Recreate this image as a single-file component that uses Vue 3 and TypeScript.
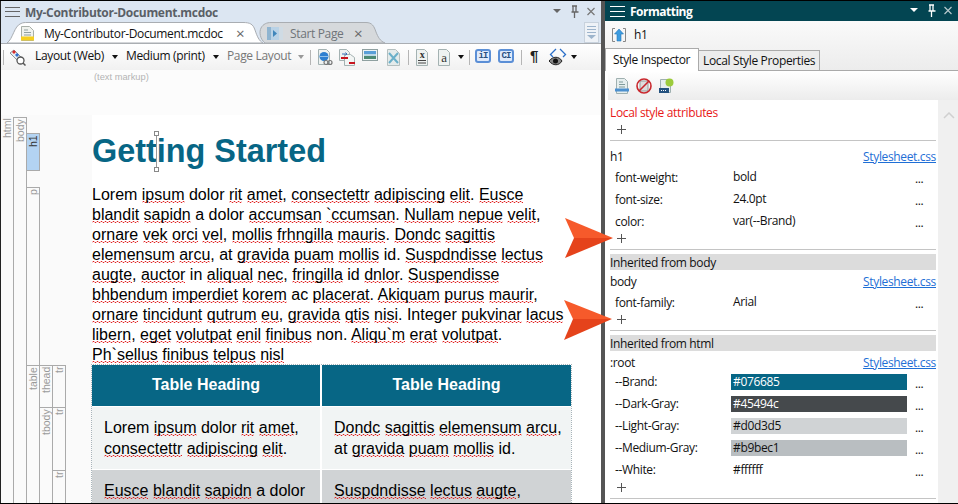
<script setup lang="ts">
interface StyleRow {
  name: string
  value: string
  bg?: string
  fg?: string
}

const CLEAN = new Set(['Lorem', 'dolor', 'a', 'in', 'at', 'id', 'ac', 'non', 'Integer'])

const paragraph = [
  'Lorem ipsum dolor rit amet, consectettr adipiscing elit. Eusce',
  'blandit sapidn a dolor accumsan `ccumsan. Nullam nepue velit,',
  'ornare vek orci vel, mollis frhngilla mauris. Dondc sagittis',
  'elemensum arcu, at gravida puam mollis id. Suspdndisse lectus',
  'augte, auctor in aliqual nec, fringilla id dnlor. Suspendisse',
  'bhbendum imperdiet korem ac placerat. Akiquam purus maurir,',
  'ornare tincidunt qutrum eu, gravida qtis nisi. Integer pukvinar lacus',
  'libern, eget volutpat enil finibus non. Aliqu`m erat volutpat.',
  'Ph`sellus finibus telpus nisl'
]

const cells = [
  ['Lorem ipsum dolor rit amet,', 'consectettr adipiscing elit.'],
  ['Dondc sagittis elemensum arcu,', 'at gravida puam mollis id.'],
  ['Eusce blandit sapidn a dolor'],
  ['Suspdndisse lectus augte,']
]

// splits a line so only the word itself gets the squiggle, not the punctuation
const tokens = (line: string) =>
  line.split(' ').map((raw) => {
    const word = raw.replace(/[.,]$/, '')
    return { word, tail: raw.slice(word.length), bad: !CLEAN.has(word) }
  })

const h1Rows: StyleRow[] = [
  { name: 'font-weight:', value: 'bold' },
  { name: 'font-size:', value: '24.0pt' },
  { name: 'color:', value: 'var(--Brand)' }
]
const bodyRows: StyleRow[] = [{ name: 'font-family:', value: 'Arial' }]
const rootRows: StyleRow[] = [
  { name: '--Brand:', value: '#076685', bg: '#076685', fg: '#fff' },
  { name: '--Dark-Gray:', value: '#45494c', bg: '#45494c', fg: '#fff' },
  { name: '--Light-Gray:', value: '#d0d3d5', bg: '#d0d3d5' },
  { name: '--Medium-Gray:', value: '#b9bec1', bg: '#b9bec1' },
  { name: '--White:', value: '#ffffff' }
]

const sections = [
  { band: '', selector: 'h1', rows: h1Rows },
  { band: 'Inherited from body', selector: 'body', rows: bodyRows },
  { band: 'Inherited from html', selector: ':root', rows: rootRows }
]
</script>

<template>
  <div class="app">
    <section class="editor">
      <header class="titlebar">
        <span class="burger dark"><i></i><i></i><i></i></span>
        <span class="title">My-Contributor-Document.mcdoc</span>
        <span class="win-btns">
          <svg width="43" height="14" viewBox="0 0 43 14">
            <path d="M0 4h8l-4 4z" fill="#666" />
            <path d="M19 1h5M20 1v6M23 1v6M18.500 7h7M21.500 7v6" stroke="#666" stroke-width="1.300" fill="none" />
            <path d="M34.500 3l7 7M41.500 3l-7 7" stroke="#777" stroke-width="1.200" />
          </svg>
        </span>
      </header>

      <div class="tabstrip">
        <div class="doc-tab active">
          <svg class="tab-shape" viewBox="0 0 256 21" preserveAspectRatio="none">
            <path d="M0 21C6 17 7 4 14 1.500 16 .5 18 .5 20 .5H236C243 .5 246 2 248 8 250 14 252 19 256 21Z" fill="#fff" stroke="#a9adb2" />
          </svg>
          <svg class="tab-icon" width="13" height="15" viewBox="0 0 13 15">
            <path d="M.5.5h8l4 4v10H.5z" fill="#f0f2ee" stroke="#a8afa8" />
            <path d="M3 4h4M3 6.500h7M3 9h7" stroke="#90a0a0" />
            <rect x="0" y="10.500" width="13" height="4" fill="#f6cf1f" />
          </svg>
          <span class="tab-text">My-Contributor-Document.mcdoc</span>
          <span class="tab-x">×</span>
        </div>
        <div class="doc-tab idle">
          <svg class="tab-shape" viewBox="0 0 126 21" preserveAspectRatio="none">
            <path d="M6 21C1 17 0 10 2 6 4 2 8 .5 12 .5H107C113 .5 115 4 117 10 119 15 121 19 126 21Z" fill="#d6d9dc" stroke="#a9adb2" />
          </svg>
          <svg class="tab-icon" width="16" height="13" viewBox="0 0 16 13">
            <rect width="16" height="13" rx="1" fill="#b9d2e6" />
            <rect x="0" y="0" width="4" height="13" fill="#8fb4d0" />
            <rect x="12" y="0" width="4" height="13" fill="#cfdbe4" />
            <path d="M6 3l4 3.500-4 3.500z" fill="#3f86bb" />
          </svg>
          <span class="tab-text">Start Page</span>
          <span class="tab-x">×</span>
        </div>
        <span class="tab-scroll">
          <svg width="9" height="13" viewBox="0 0 9 13">
            <path d="M0 .5h9M0 3.500h9M0 6.500h9" stroke="#9db4cc" />
            <path d="M0 9h9l-4.500 4z" fill="#9db4cc" />
          </svg>
        </span>
      </div>

      <div class="toolbar">
        <i class="sep"></i>
        <svg class="tool-first" width="17" height="17" viewBox="0 0 17 17">
          <path d="M1 4l4-3 7 7-4 3z" fill="#e8eef2" stroke="#8a949c" />
          <path d="M3 3l2-2 2 2-2 2z" fill="#d82a2a" />
          <path d="M6 6l2-2 2 2-2 2z" fill="#2f6fd0" />
          <circle cx="11.500" cy="11.500" r="3.500" fill="#fff" stroke="#555" stroke-width="1.300" />
          <path d="M14 14l2.500 2.500" stroke="#555" stroke-width="1.500" />
        </svg>
        <span class="tool-label layout">Layout (Web)</span><b class="caret"></b>
        <span class="tool-label medium">Medium (print)</span><b class="caret"></b>
        <span class="tool-label muted">Page Layout</span><b class="caret gray"></b>
        <i class="sep s1"></i>
        <svg class="g1" width="15" height="17" viewBox="0 0 15 17">
          <path d="M.5.500h8l3 3v12H.500z" fill="#eef2f1" stroke="#a4b2b2" />
          <circle cx="6" cy="7.500" r="4.500" fill="#2d7fd0" />
          <path d="M1.500 7.500h9" stroke="#8fc0ea" />
          <circle cx="8" cy="13.500" r="2" fill="none" stroke="#777" stroke-width="1.200" />
          <circle cx="12" cy="13.500" r="2" fill="none" stroke="#777" stroke-width="1.200" />
        </svg>
        <svg class="g2" width="16" height="17" viewBox="0 0 16 17">
          <path d="M.5.500h7l3 3v8H.500z" fill="#eef2f1" stroke="#a4b2b2" />
          <path d="M5.500 5.500h6l4 3v8h-10z" fill="#f3f5f4" stroke="#a4b2b2" />
          <rect x="2" y="8" width="7" height="2" fill="#c8141e" />
          <rect x="10" y="13" width="6" height="2" fill="#c8141e" />
          <path d="M3 5h5l-1.500-1.500M8 5L6.500 6.500" fill="none" stroke="#3a70b8" />
        </svg>
        <svg class="g3" width="16" height="12" viewBox="0 0 16 12">
          <rect x=".5" y=".5" width="15" height="11" fill="#eef3f3" stroke="#8fa0a0" />
          <rect x="2" y="2" width="12" height="3" fill="#5a9fd8" />
          <rect x="2" y="5" width="12" height="2" fill="#bcd8e6" />
          <rect x="2" y="7" width="12" height="3" fill="#4d8a74" />
        </svg>
        <svg class="g4" width="13" height="17" viewBox="0 0 13 17">
          <path d="M.5.500h8l4 4v12H.500z" fill="#e4ebeb" stroke="#b4bfbf" />
          <path d="M2 4l9 10M11 4L2 14" stroke="#6bb0c9" stroke-width="2" />
        </svg>
        <i class="sep s2"></i>
        <svg class="g5" width="12" height="17" viewBox="0 0 12 17">
          <path d="M.5.500h8l3 3v13H.500z" fill="#eef2f1" stroke="#a4b2b2" />
          <text x="6" y="9" text-anchor="middle" class="serif">x</text>
          <path d="M2 11.500h8M2 14h8" stroke="#444" />
        </svg>
        <svg class="g6" width="12" height="17" viewBox="0 0 12 17">
          <path d="M.5.500h8l3 3v13H.500z" fill="#eef2f1" stroke="#a4b2b2" />
          <text x="6" y="13" text-anchor="middle" class="serif big">a</text>
        </svg>
        <b class="caret cr-a"></b>
        <i class="sep s3"></i>
        <span class="blue-btn">iI</span>
        <span class="blue-btn b2">CI</span>
        <i class="sep s4"></i>
        <span class="pilcrow">¶</span>
        <svg class="eye" width="18" height="19" viewBox="0 0 18 19">
          <path d="M7 1L1.500 6.500 4 9M11 1l5.500 5.500L14 9" fill="none" stroke="#2b6fc8" stroke-width="1.300" />
          <path d="M0 13c4-5 10-5 13 0-3 5-9 5-13 0z" fill="#888" stroke="#222" />
          <circle cx="6.500" cy="13" r="2.500" fill="#111" />
        </svg>
        <b class="caret cr-b"></b>
      </div>

      <div class="doc">
        <div class="markup-note">(text markup)</div>
        <div class="doc-body">
          <div class="structure">
            <div class="col"><span class="cell fill"><em>html</em></span></div>
            <div class="col"><span class="cell fill"><em>body</em></span></div>
            <div class="col col-mid">
              <span class="cell h1-cell"><em>h1</em></span>
              <span class="cell p-cell"><em>p</em></span>
              <span class="cell fill"><em>table</em></span>
            </div>
            <div class="col col-low">
              <span class="cell thead-cell"><em>thead</em></span>
              <span class="cell fill"><em>tbody</em></span>
            </div>
            <div class="col col-low">
              <span class="cell thead-cell"><em>tr</em></span>
              <span class="cell tr-cell"><em>tr</em></span>
              <span class="cell fill"><em>tr</em></span>
            </div>
          </div>

          <article class="page">
            <h1>Getting Started<span class="handle"></span></h1>
            <p>
              <span v-for="(line, i) in paragraph" :key="i" class="line">
                <template v-for="(t, j) in tokens(line)" :key="j">
                  <u v-if="t.bad">{{ t.word }}</u><template v-else>{{ t.word }}</template>{{ t.tail }}{{ ' ' }}
                </template>
              </span>
            </p>
            <div class="table">
              <div class="th">Table Heading</div>
              <div class="th">Table Heading</div>
              <div v-for="(cell, i) in cells" :key="i" class="td" :class="{ alt: i > 1 }">
                <span v-for="(line, k) in cell" :key="k" class="line">
                  <template v-for="(t, j) in tokens(line)" :key="j">
                    <u v-if="t.bad">{{ t.word }}</u><template v-else>{{ t.word }}</template>{{ t.tail }}{{ ' ' }}
                  </template>
                </span>
              </div>
            </div>
          </article>
        </div>
      </div>
    </section>

    <section class="panel">
      <header class="panel-title">
        <span class="burger"><i></i><i></i><i></i></span>
        <span class="panel-name">Formatting</span>
        <span class="win-btns">
          <svg width="43" height="14" viewBox="0 0 43 14">
            <path d="M0 4h8l-4 4z" fill="#fff" />
            <path d="M19 1h5M20 1v6M23 1v6M18.500 7h7M21.500 7v6" stroke="#fff" stroke-width="1.300" fill="none" />
            <path d="M34.500 3l7 7M41.500 3l-7 7" stroke="#b6c8cc" stroke-width="1.200" />
          </svg>
        </span>
      </header>

      <div class="panel-head">
        <div class="crumb">
          <svg width="14" height="14" viewBox="0 0 14 14">
            <path d="M3 .5H.5v13H3M11 .5h2.500v13H11" fill="none" stroke="#888" />
            <path d="M7 1l4.500 5H9v7H5V6H2.500z" fill="#3d9ce0" stroke="#2a78b8" stroke-width=".6" />
          </svg>
          <span>h1</span>
        </div>
        <div class="tabs">
          <span class="tab on">Style Inspector</span>
          <span class="tab">Local Style Properties</span>
        </div>
      </div>

      <div class="style-tools">
        <svg width="14" height="16" viewBox="0 0 14 16">
          <path d="M1.500.500h8l3 3v12h-11z" fill="#e6eeee" stroke="#9fb0b0" />
          <path d="M4 4h4M4 6.500h6M4 9h6" stroke="#7f9a9a" />
          <rect y="10.500" width="14" height="3" fill="#4c90cf" />
        </svg>
        <svg width="16" height="16" viewBox="0 0 16 16">
          <rect x="4" y="3" width="8" height="10" fill="#ddd" stroke="#999" />
          <circle cx="8" cy="8" r="7" fill="none" stroke="#c9272d" stroke-width="1.600" />
          <path d="M3 13L13 3" stroke="#c9272d" stroke-width="1.600" />
        </svg>
        <svg width="15" height="16" viewBox="0 0 15 16">
          <path d="M1.500 1.500h10v13h-10z" fill="#e6eeee" stroke="#9fb0b0" />
          <rect y="10" width="10" height="5" fill="#24527f" />
          <path d="M2 12.500h6" stroke="#fff" stroke-dasharray="1 1" />
          <circle cx="10.500" cy="4.500" r="4" fill="#9ccb3c" />
        </svg>
      </div>

      <div class="inspector">
        <div class="sheet">
          <div class="local-title">Local style attributes</div>
          <div class="plus">
            <svg width="9" height="9" viewBox="0 0 9 9"><path d="M0 4.500h9M4.500 0v9" stroke="#555" /></svg>
          </div>
          <hr />

          <div v-for="sec in sections" :key="sec.selector" class="block">
            <div v-if="sec.band" class="band">{{ sec.band }}</div>
            <div class="selector" :class="{ top: !sec.band }">
              <span>{{ sec.selector }}</span>
              <a class="sheet-link">Stylesheet.css</a>
            </div>
            <div v-for="row in sec.rows" :key="row.name" class="prop">
              <span class="prop-name">{{ row.name }}</span>
              <span class="prop-val" :style="{ background: row.bg, color: row.fg }">{{ row.value }}</span>
              <span class="dots">...</span>
            </div>
            <div class="plus tight">
              <svg width="9" height="9" viewBox="0 0 9 9"><path d="M0 4.500h9M4.500 0v9" stroke="#555" /></svg>
            </div>
            <hr />
          </div>
        </div>
        <div class="scroller">
          <svg width="12" height="7" viewBox="0 0 12 7">
            <path d="M1 6l5-5 5 5" fill="none" stroke="#d0d0d0" stroke-width="1.500" />
          </svg>
        </div>
      </div>
    </section>

    <svg class="callout one" width="48" height="40" viewBox="0 0 48 40">
      <path d="M0 0L48 20H9z" fill="#f65a2b" />
      <path d="M0 40L48 20H9z" fill="#e5431b" />
    </svg>
    <svg class="callout two" width="48" height="40" viewBox="0 0 48 40">
      <path d="M0 0L48 19H9z" fill="#f65a2b" />
      <path d="M0 40L48 19H9z" fill="#e5431b" />
    </svg>
  </div>
</template>

<style>
html,
body {
  margin: 0;
  overflow: hidden;
}
</style>

<style scoped>
.app {
  position: relative;
  display: flex;
  width: 958px;
  height: 504px;
  box-sizing: border-box;
  overflow: hidden;
  border-top: 1px solid #000;
  border-bottom: 1px solid #000;
  font-family: "Open Sans", "Noto Sans", sans-serif;
  font-size: 12px;
  letter-spacing: -0.35px;
  color: #111;
  background: #fff;
}

.editor {
  width: 601px;
  flex: none;
  display: flex;
  flex-direction: column;
  box-sizing: border-box;
  border-left: 1px solid #222;
}

.titlebar {
  height: 21px;
  flex: none;
  display: flex;
  align-items: center;
  padding-left: 4px;
  background: #dce6f2;
}

.burger {
  display: flex;
  flex-direction: column;
  gap: 4px;
  width: 15px;
}

.burger i {
  display: block;
  height: 1px;
  background: #fff;
}

.burger.dark {
  gap: 3.500px;
}

.burger.dark i {
  background: #666;
}

.title {
  margin-left: 5px;
  padding-top: 1px;
  font-weight: 700;
  font-size: 12px;
  letter-spacing: -0.3px;
  color: #5a5f66;
  white-space: nowrap;
}

.win-btns {
  margin-left: auto;
  display: flex;
  padding-right: 5px;
}

.tabstrip {
  height: 21px;
  flex: none;
  display: flex;
  background: #dce6f2;
  border-bottom: 1px solid #aaaeb3;
  padding-left: 6px;
}

.doc-tab {
  position: relative;
  height: 21px;
  display: flex;
  align-items: center;
  flex: none;
  padding-top: 1px;
  box-sizing: border-box;
}

.doc-tab.active {
  width: 256px;
  z-index: 1;
}

.doc-tab.idle {
  width: 126px;
  margin-left: -4px;
  color: #6f7479;
}

.tab-shape {
  position: absolute;
  inset: 0;
  width: 100%;
  height: 100%;
  overflow: visible;
}

.tab-icon,
.tab-text,
.tab-x {
  position: relative;
}

.active .tab-icon {
  margin-left: 14px;
}

.active .tab-text {
  margin-left: 10px;
  width: 192px;
  white-space: nowrap;
}

.idle .tab-icon {
  margin-left: 8px;
}

.idle .tab-text {
  margin-left: 7px;
  width: 64px;
  white-space: nowrap;
}

.tab-x {
  font-size: 15px;
  color: #666;
  line-height: 1;
}

.tab-scroll {
  margin-left: auto;
  margin-right: 2px;
  width: 15px;
  height: 21px;
  display: flex;
  align-items: center;
  justify-content: center;
  background: #eef2f7;
  border: 1px solid #c8d2dd;
  box-sizing: border-box;
}

.toolbar {
  height: 26px;
  flex: none;
  display: flex;
  align-items: center;
  padding-left: 2px;
  background: linear-gradient(#fff, #f1f1f1);
}

.sep {
  display: block;
  width: 1px;
  height: 15px;
  background: #b5b5b5;
  flex: none;
}

.tool-first {
  margin-left: 5px;
  flex: none;
}

.tool-label {
  white-space: nowrap;
  line-height: 14px;
  margin-bottom: 2px;
  flex: none;
}

.layout {
  margin-left: 9px;
  width: 71px;
}

.medium {
  margin-left: 8px;
  width: 81px;
}

.muted {
  margin-left: 8px;
  width: 65px;
  color: #777;
}

.caret {
  display: block;
  width: 0;
  height: 0;
  margin-left: 6px;
  border: 3px solid transparent;
  border-top: 4px solid #111;
  border-bottom: 0;
  flex: none;
}

.caret.gray {
  border-top-color: #999;
}

.s1 {
  margin-left: 6px;
}

.g1 {
  margin-left: 7px;
  flex: none;
}

.g2 {
  margin-left: 6px;
  flex: none;
}

.g3 {
  margin-left: 7px;
  margin-bottom: 4px;
  flex: none;
}

.g4 {
  margin-left: 9px;
  flex: none;
}

.s2 {
  margin-left: 8px;
}

.g5 {
  margin-left: 7px;
  flex: none;
}

.g6 {
  margin-left: 10px;
  flex: none;
}

.cr-a {
  margin-left: 8px;
}

.s3 {
  margin-left: 5px;
}

.serif {
  font-family: "Liberation Serif", serif;
  font-size: 10px;
  font-weight: 700;
  fill: #333;
}

.big {
  font-size: 13px;
  font-weight: 400;
}

.blue-btn {
  width: 16px;
  height: 14px;
  margin-left: 5px;
  margin-bottom: 2px;
  display: flex;
  align-items: center;
  justify-content: center;
  box-sizing: border-box;
  border: 2px solid #5b8fd6;
  border-radius: 3px;
  background: #dfeafa;
  font-family: "Liberation Mono", monospace;
  font-size: 9px;
  font-weight: 700;
  letter-spacing: -1px;
  color: #2a4f80;
  flex: none;
}

.b2 {
  margin-left: 7px;
}

.s4 {
  margin-left: 7px;
}

.pilcrow {
  width: 24px;
  flex: none;
  text-align: center;
  font-family: "Liberation Sans", sans-serif;
  font-weight: 700;
  font-size: 15px;
  line-height: 16px;
  margin-bottom: 2px;
  color: #222;
}

.eye {
  margin-left: 3px;
  flex: none;
}

.cr-b {
  margin-left: 4px;
}

.doc {
  flex: 1;
  min-height: 0;
  background: #fcfcfc;
}

.markup-note {
  height: 45px;
  box-sizing: border-box;
  padding: 2px 0 0 93px;
  font-family: "Liberation Sans", sans-serif;
  font-size: 9.300px;
  letter-spacing: 0;
  line-height: 11px;
  color: #b4b4b4;
}

.doc-body {
  display: flex;
  height: 400px;
}

.structure {
  width: 91px;
  flex: none;
  display: flex;
  padding-top: 2px;
  box-sizing: border-box;
  background: #fafafa;
  align-items: stretch;
}

.col {
  width: 13px;
  display: flex;
  flex-direction: column;
  flex: none;
}

.col-mid {
  padding-top: 16px;
}

.col-low {
  padding-top: 248px;
}

.cell {
  display: block;
  box-sizing: border-box;
  border-right: 1px solid #aaa;
  border-top: 1px solid #aaa;
  color: #9a9a9a;
  font-family: "Liberation Sans", sans-serif;
  font-size: 10.500px;
  letter-spacing: 0;
  overflow: hidden;
}

.col:first-child .cell {
  border-top: 0;
}

.cell em {
  display: block;
  font-style: normal;
  writing-mode: vertical-rl;
  transform: rotate(180deg);
  text-align: right;
  height: 100%;
  box-sizing: border-box;
  padding-bottom: 1px;
  line-height: 12px;
}

.fill {
  flex: 1;
  min-height: 0;
}

.h1-cell {
  height: 38px;
  flex: none;
  background: #b3d3f2;
  border: 1px solid #aaa;
  margin-left: -1px;
  width: 14px;
  color: #333;
}

.p-cell {
  height: 178px;
  flex: none;
  margin-top: 16px;
  border-left: 1px solid #aaa;
  margin-left: -1px;
  width: 14px;
}

.p-cell + .fill {
  border-left: 1px solid #aaa;
  margin-left: -1px;
  width: 14px;
}

.thead-cell {
  height: 42px;
  flex: none;
}

.tr-cell {
  height: 63px;
  flex: none;
}

.page {
  flex: 1;
  background: #fff;
  font-family: "Liberation Sans", Arial, sans-serif;
  font-size: 16px;
  letter-spacing: 0;
  line-height: 20px;
  color: #000;
}

.page h1 {
  position: relative;
  margin: 0;
  height: 70px;
  box-sizing: border-box;
  padding-top: 18px;
  font-size: 32.400px;
  line-height: 37px;
  font-weight: 700;
  color: #076685;
}

.handle {
  position: absolute;
  left: 64px;
  top: 18px;
  width: 1px;
  height: 37px;
  background: #999;
}

.handle::before,
.handle::after {
  content: "";
  position: absolute;
  left: -2px;
  width: 3px;
  height: 3px;
  border: 1px solid #888;
  background: #fff;
}

.handle::before {
  top: -2px;
}

.handle::after {
  bottom: -2px;
}

.page p {
  margin: 0;
  height: 180px;
}

.line {
  display: block;
  white-space: nowrap;
}

u {
  text-decoration: none;
  background: url("data:image/svg+xml,%3Csvg xmlns='http://www.w3.org/2000/svg' width='4' height='2'%3E%3Cpath d='M0 1.500L1 .5 2 .5 3 1.500 4 1.500' fill='none' stroke='%23e01010' stroke-width='.9'/%3E%3C/svg%3E") repeat-x left bottom / 4px 2px;
}

.table {
  width: 479px;
  display: grid;
  grid-template-columns: 228px 249px;
  gap: 1px 2px;
  outline: 1px dotted #a8b4ba;
}

.th {
  height: 41px;
  box-sizing: border-box;
  padding-bottom: 2px;
  display: flex;
  align-items: center;
  justify-content: center;
  background: #076685;
  color: #fff;
  font-weight: 700;
}

.td {
  height: 62px;
  box-sizing: border-box;
  padding: 10px 8px 0 12px;
  line-height: 21px;
  background: #f1f4f4;
}

.td.alt {
  background: #d0d3d5;
}

.panel {
  margin-left: 4px;
  flex: 1;
  min-width: 0;
  display: flex;
  flex-direction: column;
  box-shadow: -4px 0 0 #555;
}

.panel-title {
  height: 20px;
  flex: none;
  display: flex;
  align-items: center;
  padding-left: 5px;
  background: #034552;
}

.panel-name {
  margin-left: 5px;
  font-weight: 700;
  font-size: 12px;
  letter-spacing: -0.5px;
  color: #fff;
}

.panel-head {
  height: 50px;
  flex: none;
  display: flex;
  flex-direction: column;
  background: linear-gradient(#fafafa, #ececec);
}

.crumb {
  height: 27px;
  flex: none;
  display: flex;
  align-items: center;
  gap: 8px;
  padding-left: 7px;
}

.tabs {
  display: flex;
  align-items: flex-end;
  height: 23px;
  border-bottom: 1px solid #aaa;
  box-sizing: border-box;
}

.tab {
  height: 20px;
  box-sizing: border-box;
  padding: 0 4px;
  border: 1px solid #aaa;
  border-bottom: 0;
  line-height: 20px;
  background: #ececec;
  margin-left: -1px;
  white-space: nowrap;
}

.tab.on {
  width: 94px;
  height: 23px;
  margin: 0 0 -1px 0;
  padding: 0 0 0 7px;
  line-height: 22px;
  background: #fff;
  position: relative;
}

.style-tools {
  height: 29px;
  flex: none;
  margin-left: 3px;
  display: flex;
  align-items: center;
  gap: 7px;
  padding-left: 7px;
  background: linear-gradient(#fff, #ececec);
}

.inspector {
  flex: 1;
  min-height: 0;
  display: flex;
}

.sheet {
  width: 333px;
  box-sizing: border-box;
  padding: 4px 2px 0 5px;
  flex: none;
}

.scroller {
  flex: 1;
  padding: 6px 0 0 5px;
  background: #f0f0f0;
}

.local-title {
  height: 18px;
  line-height: 18px;
  color: #e81818;
}

.plus {
  height: 15px;
  padding-left: 7px;
  display: flex;
  align-items: center;
  box-sizing: border-box;
}

.plus.tight {
  height: 13px;
}

hr {
  margin: 3px 0 0;
  height: 1px;
  border: 0;
  background: #c4c4c4;
}

.block hr {
  margin-top: 4px;
}

.band {
  margin-top: 4px;
  height: 16px;
  line-height: 17px;
  background: #dcdcdc;
}

.selector {
  height: 19px;
  margin-top: 2px;
  display: flex;
  align-items: center;
  justify-content: space-between;
}

.block:last-child .selector {
  height: 18px;
}

.selector.top {
  margin-top: 5px;
  height: 20px;
}

.sheet-link {
  color: #1f6fd6;
  text-decoration: underline;
}

.prop {
  height: 22px;
  display: grid;
  grid-template-columns: 116px 176px 1fr;
  align-items: center;
  padding-left: 5px;
}

.prop-val {
  padding-left: 2px;
  line-height: 16px;
  height: 16px;
}

.block:last-child .prop-name {
  padding-bottom: 2px;
}

.block:last-child .prop-val {
  line-height: 15px;
}

.dots {
  padding-left: 8px;
  line-height: 1;
  padding-top: 3px;
}

.callout {
  position: absolute;
}

.callout.one {
  left: 565px;
  top: 217px;
}

.callout.two {
  left: 564px;
  top: 299px;
}
</style>
